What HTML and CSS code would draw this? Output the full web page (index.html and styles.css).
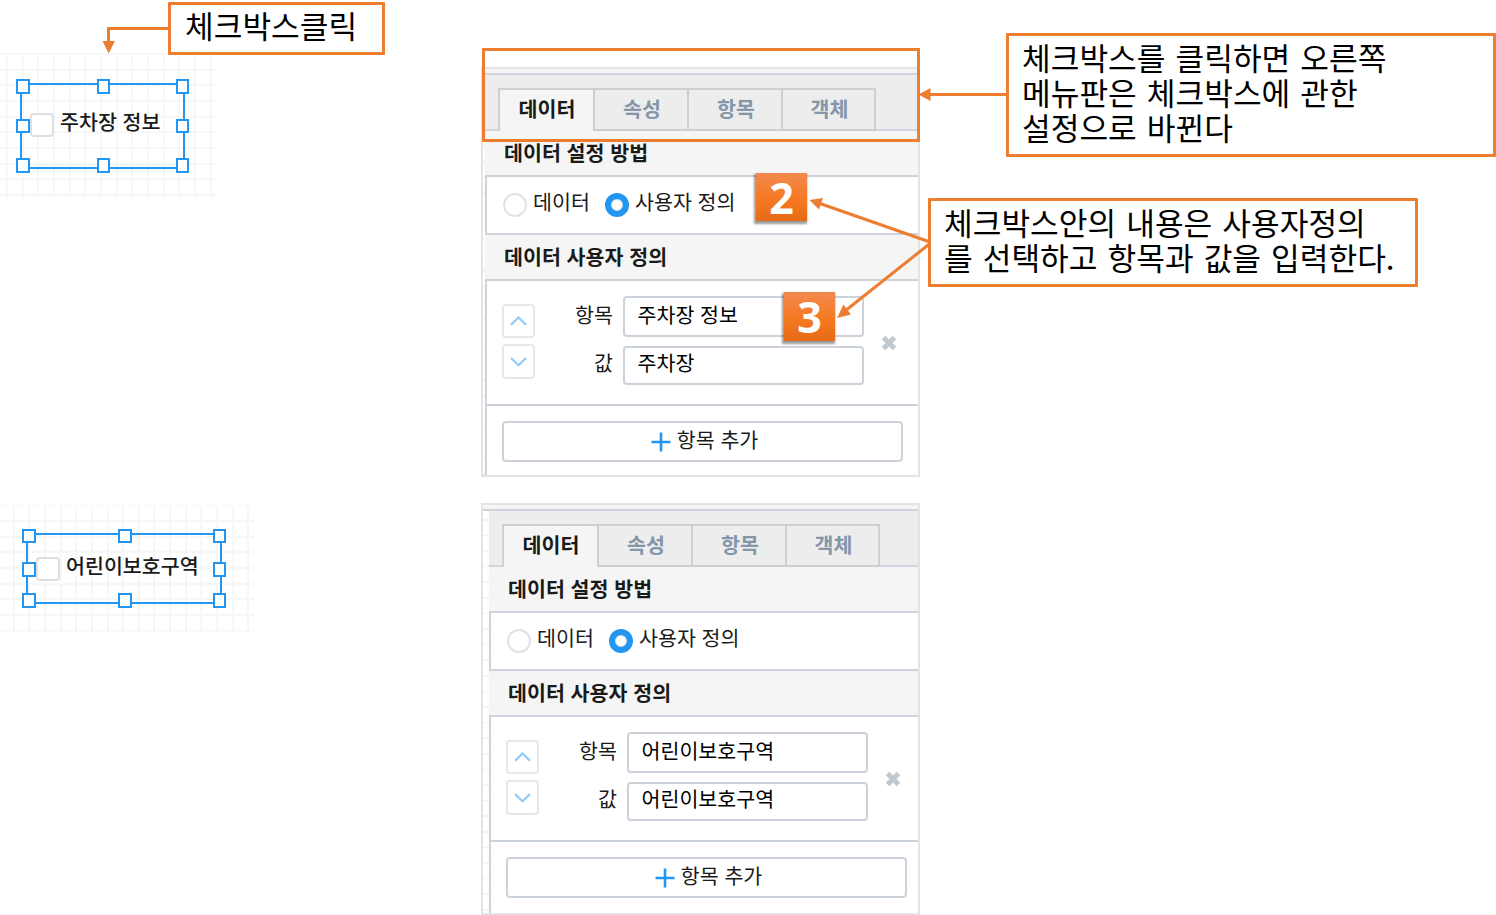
FILE: index.html
```html
<!DOCTYPE html>
<html lang="ko">
<head>
<meta charset="utf-8">
<title>체크박스 설정</title>
<link rel="stylesheet" href="styles.css">
</head>
<body>
<main class="slide">
  <section class="canvas canvas-a">
    <div class="check"><i class="box"></i><span>주차장 정보</span></div>
    <svg class="selection" width="217" height="144" viewBox="0 53 217 144">
      <rect x="21" y="84" width="163" height="84"/>
      <g class="handles">
        <rect x="17" y="80" width="12" height="13"/><rect x="98" y="80" width="11" height="13"/><rect x="177" y="80" width="11" height="13"/>
        <rect x="17" y="120" width="12" height="12"/><rect x="177" y="120" width="11" height="12"/>
        <rect x="17" y="159" width="12" height="13"/><rect x="98" y="159" width="11" height="13"/><rect x="177" y="159" width="11" height="13"/>
      </g>
    </svg>
  </section>

  <section class="canvas canvas-b">
    <div class="check"><i class="box"></i><span>어린이보호구역</span></div>
    <svg class="selection" width="254" height="127" viewBox="0 505 254 127">
      <rect x="27" y="534" width="194" height="69"/>
      <g class="handles">
        <rect x="23" y="530" width="12" height="12"/><rect x="119" y="530" width="12" height="12"/><rect x="214" y="530" width="11" height="12"/>
        <rect x="23" y="563" width="12" height="13"/><rect x="214" y="563" width="11" height="13"/>
        <rect x="23" y="594" width="12" height="13"/><rect x="119" y="594" width="12" height="13"/><rect x="214" y="594" width="11" height="13"/>
      </g>
    </svg>
  </section>

  <section class="panel panel-a">
    <div class="strip"></div>
    <div class="body">
      <nav class="tabs"><b class="tab on">데이터</b><b class="tab">속성</b><b class="tab">항목</b><b class="tab">객체</b></nav>
      <h3 class="head">데이터 설정 방법</h3>
      <div class="radios"><i class="radio"></i><span class="first">데이터</span><i class="radio sel"></i><span>사용자 정의</span></div>
      <h3 class="head second">데이터 사용자 정의</h3>
      <div class="item">
        <div class="movers">
          <div class="mover"><svg width="17" height="10" viewBox="0 0 17 10"><path d="M1 8.700 8.500 1.500l7.500 7.200"/></svg></div>
          <div class="mover down"><svg width="17" height="10" viewBox="0 0 17 10"><path d="M1 1 8.500 8.200 16 1"/></svg></div>
        </div>
        <div class="fields">
          <div class="field"><span>항목</span><div class="input">주차장 정보</div></div>
          <div class="field low"><span>값</span><div class="input">주차장</div></div>
        </div>
        <svg class="remove" width="16" height="16" viewBox="0 0 16 16"><path d="M2.500 2.500l11 11M13.500 2.500l-11 11"/></svg>
      </div>
      <div class="adder"><div class="add"><svg width="20" height="20" viewBox="0 0 20 20"><path d="M10 .500v19M.500 10h19"/></svg><span>항목 추가</span></div></div>
    </div>
  </section>

  <section class="panel panel-b">
    <div class="strip"></div>
    <div class="body">
      <nav class="tabs"><b class="tab on">데이터</b><b class="tab">속성</b><b class="tab">항목</b><b class="tab">객체</b></nav>
      <h3 class="head">데이터 설정 방법</h3>
      <div class="radios"><i class="radio"></i><span class="first">데이터</span><i class="radio sel"></i><span>사용자 정의</span></div>
      <h3 class="head second">데이터 사용자 정의</h3>
      <div class="item">
        <div class="movers">
          <div class="mover"><svg width="17" height="10" viewBox="0 0 17 10"><path d="M1 8.700 8.500 1.500l7.500 7.200"/></svg></div>
          <div class="mover down"><svg width="17" height="10" viewBox="0 0 17 10"><path d="M1 1 8.500 8.200 16 1"/></svg></div>
        </div>
        <div class="fields">
          <div class="field"><span>항목</span><div class="input">어린이보호구역</div></div>
          <div class="field low"><span>값</span><div class="input">어린이보호구역</div></div>
        </div>
        <svg class="remove" width="16" height="16" viewBox="0 0 16 16"><path d="M2.500 2.500l11 11M13.500 2.500l-11 11"/></svg>
      </div>
      <div class="adder"><div class="add"><svg width="20" height="20" viewBox="0 0 20 20"><path d="M10 .500v19M.500 10h19"/></svg><span>항목 추가</span></div></div>
    </div>
  </section>

  <div class="badge two">2</div>
  <div class="badge three">3</div>

  <div class="frame"></div>
  <div class="note note-a">체크박스클릭</div>
  <div class="note note-b">체크박스를 클릭하면 오른쪽<br>메뉴판은 체크박스에 관한<br>설정으로 바뀐다</div>
  <div class="note note-c">체크박스안의 내용은 사용자정의<br>를 선택하고 항목과 값을 입력한다.</div>

  <svg class="arrows" width="1496" height="915" viewBox="0 0 1496 915">
    <path class="line" d="M169 28.500H108.500V43M1007 94.500H929M930 242 820 203.500M930 243.500 845 311"/>
    <path class="tip" d="M102.500 41h12.500l-6.300 12.500zM918.500 94.500l12-6.500v13zM809.500 200l13.500-2-4 11.500zM837 318l6.500-13.500 7.500 10z"/>
  </svg>
</main>
</body>
</html>
```
FILE: styles.css
```css
* { box-sizing: border-box; }
body { margin: 0; background: #fff; font-family: "Noto Sans CJK KR", sans-serif; }
.slide { position: relative; width: 1496px; height: 915px; overflow: hidden; }

/* design canvas with a selected checkbox */
.canvas {
  position: absolute; left: 0;
  background-image:
    repeating-linear-gradient(90deg, #f7f7f7 0 2px, transparent 2px 15.65px),
    repeating-linear-gradient(180deg, #f7f7f7 0 2px, transparent 2px 15.65px);
  background-repeat: no-repeat;
}
.canvas-a { top: 53px; width: 217px; height: 144px; padding: 60px 0 0 30px; background-position: -9.5px 0, 0 0; background-size: 227px 100%, 100% 100%; }
.canvas-b { top: 505px; width: 254px; height: 127px; padding: 52px 0 0 36px; background-position: -3px 0, 0 -.5px; background-size: 257px 100%, 100% 100%; }
.check { display: flex; gap: 6px; height: 24px; font-size: 20.6px; font-weight: 500; line-height: 24px; color: #1a1a1a; white-space: nowrap; }
.check span { margin-top: -4px; }
.box { width: 24px; height: 24px; border: 2px solid #dcdfe5; border-radius: 4px; background: #fff; }
.selection { position: absolute; left: 0; top: 0; fill: none; stroke: #2196f3; stroke-width: 2; }
.handles { fill: #fff; }

/* property panel */
.panel {
  position: absolute; left: 481px; width: 439px; border: 2px solid #e4e4e4; overflow: hidden;
  display: flex; flex-direction: column;
  background: repeating-linear-gradient(180deg, #fff 0 14px, #f3f3f3 14px 15.6px);
}
.panel-a { top: 67px; height: 410px; }
.panel-b { top: 503px; height: 412px; }
.strip { flex: none; height: 6px; background: #f5f5f5; border-bottom: 2px solid #ccd3db; }
.body { flex: 1; display: flex; flex-direction: column; margin-left: 2px; background: #fff; font-size: 20.6px; color: #1a1a1a; white-space: nowrap; }
.panel-b .body { margin-left: 6px; }
.tabs { display: flex; height: 56px; padding-top: 13px; background: linear-gradient(#ededed 0 54px, #d0d5de 54px); }
.tab {
  width: 94px; height: 43px; padding-left: 2px; border: 2px solid #cfcfcf; border-left: 0; background: #ededed;
  color: #8496a9; text-align: center; line-height: 36px;
}
.tab:last-child { width: 93px; }
.tab.on { width: 97px; margin-left: 13px; padding-left: 1px; border-left: 2px solid #cfcfcf; border-bottom: 0; background: #f5f5f5; color: #1a1a1a; }
.head { margin: 0; height: 44px; padding-left: 19px; background: #f5f5f5; font-size: 20.6px; font-weight: 700; line-height: 42px; }
.radios {
  display: flex; height: 60px; padding: 16px 0 0 16px;
  border: 2px solid #ccd3db; border-right: 0;
}
.radios span { line-height: 24px; margin-top: -4px; margin-left: 6px; }
.radio { width: 24px; height: 24px; border: 2px solid #dfe2e8; border-radius: 50%; background: #fff; }
.radio.sel { border: 6px solid #2196f3; margin-left: 15px; box-shadow: inset 0 0 2px #8fa3b0; }
.first { width: 57px; }
.item {
  display: flex; height: 127px; padding: 15px 0 0 15px;
  border: 2px solid #ccd3db; border-right: 0;
}
.movers { display: flex; flex-direction: column; gap: 6px; width: 33px; padding-top: 8px; }
.mover { display: flex; align-items: center; justify-content: center; height: 34px; border: 2px solid #e6e7ec; border-radius: 4px; fill: none; stroke: #90caf9; stroke-width: 2.2; }
.mover.down { height: 35px; }
.fields { display: flex; flex-direction: column; gap: 9px; margin-left: 31px; }
.field { display: flex; gap: 10px; }
.field > span { width: 47px; text-align: right; line-height: 36px; }
.input { width: 241px; height: 41px; padding-left: 12.5px; border: 2px solid #ccd3db; border-radius: 4px; background: #fff; color: #000; line-height: 33px; }
.field.low > span { line-height: 32px; }
.low .input { height: 39px; line-height: 29px; }
.remove { margin: 39px 0 0 17px; fill: none; stroke: #c0c8d0; stroke-width: 5; }
.adder { flex: 1; padding: 15px 0 0 15px; border-left: 2px solid #ccd3db; }
.add { display: flex; justify-content: center; gap: 6px; width: 401px; height: 41px; padding-left: 4px; border: 2px solid #ccd3db; border-radius: 4px; line-height: 32px; }
.add svg { margin-top: 9px; fill: none; stroke: #2196f3; stroke-width: 2.6; }

/* numbered markers */
.badge {
  position: absolute; width: 51px; height: 48px; background: linear-gradient(#f28a4e, #f67922 55%, #e66a16);
  box-shadow: -1px 2px 2px 1px rgba(0, 0, 0, .4);
  color: #fff; font: 700 43px/49px "Open Sans", sans-serif; text-align: center;
}
.two { left: 756px; top: 173px; }
.three { left: 784px; top: 292px; height: 49px; }

/* callouts */
.frame { position: absolute; left: 482px; top: 48px; width: 438px; height: 94px; border: 3px solid #ed7d31; }
.note { position: absolute; border: 3px solid #ed7d31; border-radius: 1px; background: #fff; color: #000; font-size: 31.2px; line-height: 35px; word-spacing: 1.3px; white-space: nowrap; }
.note-a { left: 168px; top: 2px; width: 217px; height: 53px; padding: 2px 0 0 14px; }
.note-b { left: 1006px; top: 33px; width: 490px; height: 124px; padding: 3px 0 0 13px; }
.note-c { left: 928px; top: 198px; width: 490px; height: 89px; padding: 3px 0 0 13px; }
.arrows { position: absolute; left: 0; top: 0; pointer-events: none; }
.line { fill: none; stroke: #ed7d31; stroke-width: 3; }
.tip { fill: #ed7d31; }
```
